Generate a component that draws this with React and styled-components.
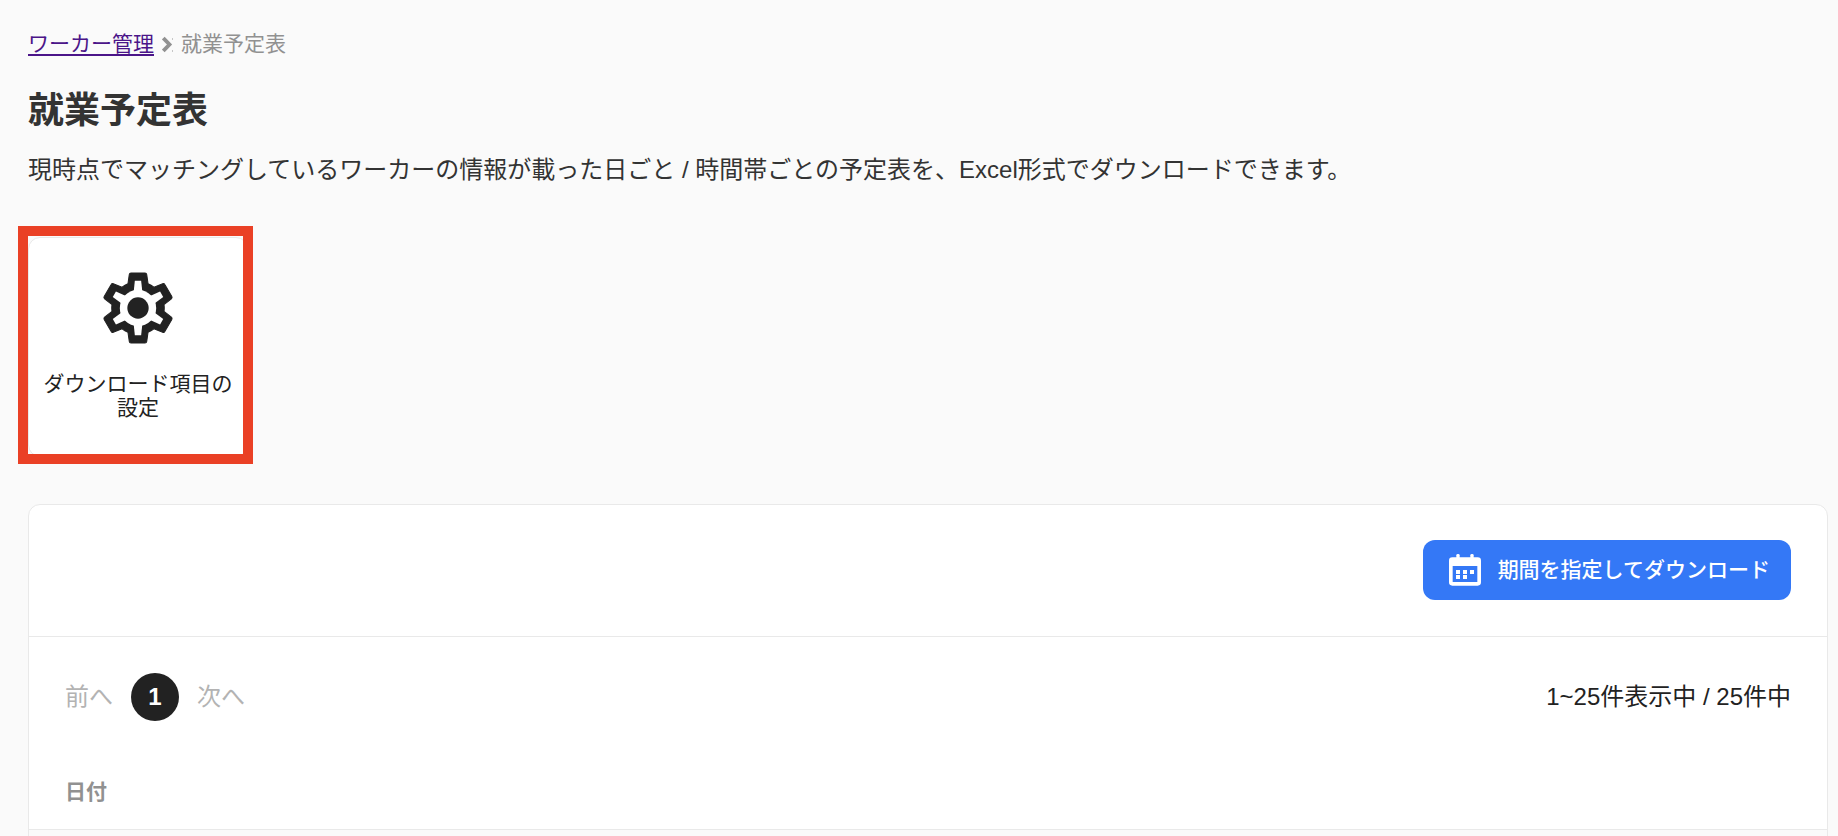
import React from 'react';
import styled, { createGlobalStyle } from 'styled-components';

const colors = {
  background: '#fafafa',
  surface: '#ffffff',
  border: '#e9e9e9',
  text: '#333333',
  dark: '#222222',
  muted: '#919191',
  disabled: '#b3b3b3',
  link: '#4b1589',
  primary: '#3478f6',
  highlight: '#ea4025',
};

const GlobalStyle = createGlobalStyle`
    * {
        box-sizing: border-box;
    }

    body {
        margin: 0;
        background-color: ${colors.background};
        color: ${colors.text};
        font-family: "Liberation Sans", "Noto Sans CJK JP", sans-serif;
    }

    button {
        font-family: inherit;
    }
`;

const Page = styled.main`
    padding: 28px 10px 0 28px;
`;

const Breadcrumb = styled.nav`
    display: flex;
    align-items: center;
    gap: 8px;
    font-size: 21px;
    line-height: 32px;
    color: ${colors.muted};
`;

const BreadcrumbLink = styled.a`
    color: ${colors.link};
    text-decoration: underline;
    text-decoration-thickness: 2px;
    text-underline-offset: 3px;
`;

const Title = styled.h1`
    margin: 25px 0 0;
    font-size: 36px;
    line-height: 52px;
    font-weight: bold;
`;

const Description = styled.p`
    margin: 15px 0 0;
    font-size: 24px;
    line-height: 36px;
`;

const MenuItem = styled.div`
    position: relative;
    width: 220px;
    margin-top: 49px;
`;

const MenuCard = styled.button`
    display: flex;
    flex-direction: column;
    align-items: center;
    width: 100%;
    min-height: 220px;
    padding: 28px 12px 0;
    border: 1px solid ${colors.border};
    border-radius: 12px;
    background-color: ${colors.surface};
    color: ${colors.dark};
    font-size: 21px;
    line-height: 24px;
`;

const MenuLabel = styled.span`
    margin-top: 22px;
`;

const Highlight = styled.div`
    position: absolute;
    inset: -11px -5px -7px -10px;
    border: 10px solid ${colors.highlight};
    pointer-events: none;
`;

const Panel = styled.section`
    margin-top: 47px;
    border: 1px solid ${colors.border};
    border-radius: 12px;
    background-color: ${colors.surface};
    overflow: hidden;
`;

const PanelHeader = styled.div`
    display: flex;
    justify-content: flex-end;
    padding: 35px 36px 36px;
    border-bottom: 1px solid ${colors.border};
`;

const DownloadButton = styled.button`
    display: flex;
    align-items: center;
    gap: 17px;
    height: 60px;
    padding: 0 21px 0 26px;
    border: none;
    border-radius: 12px;
    background-color: ${colors.primary};
    color: ${colors.surface};
    font-size: 21px;
    line-height: 32px;
    font-weight: 500;
`;

const Toolbar = styled.div`
    display: flex;
    align-items: center;
    justify-content: space-between;
    padding: 36px;
    color: ${colors.dark};
    font-size: 24px;
    line-height: 36px;
`;

const Pagination = styled.nav`
    display: flex;
    align-items: center;
    gap: 18px;
`;

const PageStep = styled.button`
    padding: 0;
    border: none;
    background: none;
    color: ${colors.disabled};
    font-size: 24px;
    line-height: 36px;
`;

const PageNumber = styled.button`
    width: 48px;
    height: 48px;
    padding: 0;
    border: none;
    border-radius: 50%;
    background-color: ${colors.dark};
    color: ${colors.surface};
    font-size: 24px;
    font-weight: bold;
`;

const Table = styled.table`
    width: 100%;
    border-collapse: collapse;
`;

const HeadCell = styled.th`
    padding: 19px 36px 21px;
    border-bottom: 1px solid ${colors.border};
    color: ${colors.muted};
    font-size: 21px;
    line-height: 32px;
    text-align: left;
`;

const BodyCell = styled.td`
    height: 72px;
    background-color: ${colors.background};
`;

const ChevronIcon = () => (
  <svg width="11" height="18" viewBox="0 0 11 18" fill="none" aria-hidden="true">
    <path d="M1.3 3l6.2 6.5L1.3 16" stroke={colors.muted} strokeWidth="3.8" />
    <path d="M10 3h1v2h-1zM10 15h1v2h-1z" fill={colors.muted} opacity="0.5" />
  </svg>
);

const GearIcon = () => (
  <svg width="84" height="84" viewBox="0 0 24 24" aria-hidden="true">
    <path
      fill={colors.dark}
      stroke={colors.dark}
      strokeWidth="0.3"
      strokeLinejoin="round"
      d="M19.43 12.98c.04-.32.07-.64.07-.98s-.03-.66-.07-.98l2.11-1.65c.19-.15.24-.42.12-.64l-2-3.46c-.12-.22-.39-.3-.61-.22l-2.49 1c-.52-.4-1.08-.73-1.69-.98l-.38-2.65C14.46 2.18 14.25 2 14 2h-4c-.25 0-.46.18-.49.42l-.38 2.65c-.61.25-1.17.59-1.69.98l-2.49-1c-.23-.09-.49 0-.61.22l-2 3.46c-.13.22-.07.49.12.64l2.11 1.65c-.04.32-.07.65-.07.98s.03.66.07.98l-2.11 1.65c-.19.15-.24.42-.12.64l2 3.46c.12.22.39.3.61.22l2.49-1c.52.4 1.08.73 1.69.98l.38 2.65c.03.24.24.42.49.42h4c.25 0 .46-.18.49-.42l.38-2.65c.61-.25 1.17-.59 1.69-.98l2.49 1c.23.09.49 0 .61-.22l2-3.46c.12-.22.07-.49-.12-.64z"
    />
    <g fill={colors.surface}>
      <circle cx="12" cy="12" r="5.2" />
      {[0, 60, 120, 180, 240, 300].map((angle) => (
        <path key={angle} d="M11.1 4.2h1.8L13.3 8h-2.6z" transform={`rotate(${angle} 12 12)`} />
      ))}
    </g>
    <circle cx="12" cy="12" r="3.05" fill={colors.dark} />
  </svg>
);

const CalendarIcon = () => (
  <svg width="32" height="32" viewBox="0 0 96 96" fill="currentColor" aria-hidden="true">
    <rect x="22" y="0" width="10" height="20" rx="4" />
    <rect x="64" y="0" width="10" height="20" rx="4" />
    <path
      fillRule="evenodd"
      d="M10 10h76a10 10 0 0 1 10 10v65a10 10 0 0 1-10 10H10a10 10 0 0 1-10-10V20a10 10 0 0 1 10-10zM11 36v48h74V36z"
    />
    <path d="M21 48h12v12H21zM42 48h12v12H42zM63 48h12v12H63zM21 63h12v12H21zM42 63h12v12H42z" />
  </svg>
);

const App = () => {
  return (
    <>
      <GlobalStyle />
      <Page>
        <Breadcrumb>
          <BreadcrumbLink href="#workers">ワーカー管理</BreadcrumbLink>
          <ChevronIcon />
          <span>就業予定表</span>
        </Breadcrumb>
        <Title>就業予定表</Title>
        <Description>
          現時点でマッチングしているワーカーの情報が載った日ごと / 時間帯ごとの予定表を、Excel形式でダウンロードできます。
        </Description>
        <MenuItem>
          <MenuCard type="button">
            <GearIcon />
            <MenuLabel>ダウンロード項目の設定</MenuLabel>
          </MenuCard>
          <Highlight />
        </MenuItem>
        <Panel>
          <PanelHeader>
            <DownloadButton type="button">
              <CalendarIcon />
              期間を指定してダウンロード
            </DownloadButton>
          </PanelHeader>
          <Toolbar>
            <Pagination>
              <PageStep type="button">前へ</PageStep>
              <PageNumber type="button">1</PageNumber>
              <PageStep type="button">次へ</PageStep>
            </Pagination>
            <span>1~25件表示中 / 25件中</span>
          </Toolbar>
          <Table>
            <thead>
              <tr>
                <HeadCell scope="col">日付</HeadCell>
              </tr>
            </thead>
            <tbody>
              <tr>
                <BodyCell />
              </tr>
            </tbody>
          </Table>
        </Panel>
      </Page>
    </>
  );
};

export default App;
